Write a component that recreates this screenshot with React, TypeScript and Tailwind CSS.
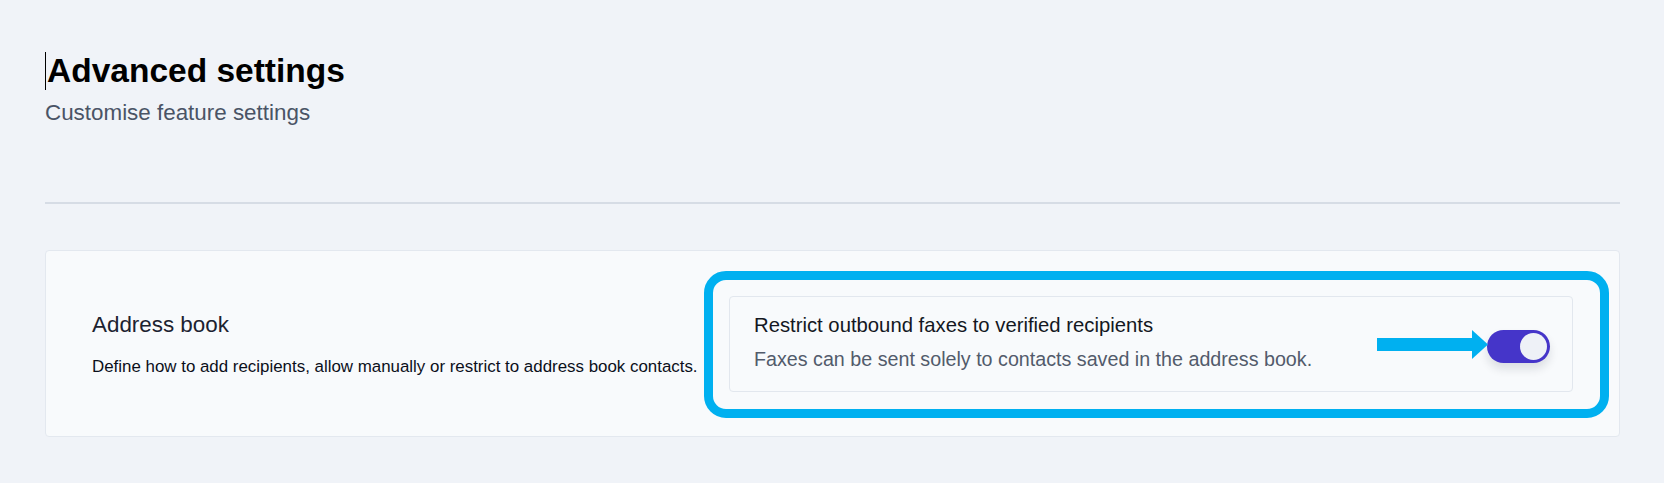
const Toggle = () => {
  return (
    <div className="mt-[6px] flex h-[33px] w-[63px] items-center justify-end rounded-full bg-[#4535c9] px-[3px] shadow-[0_6px_10px_rgba(15,23,42,0.12)]">
      <div className="h-[27px] w-[27px] rounded-full bg-[#eef1f7]" />
    </div>
  );
};

const App = () => {
  return (
    <div className="min-h-[483px] w-full bg-[#f0f3f8] pl-[45px] pr-[44px] pt-[51px] font-['Liberation_Sans',Arial,sans-serif]">
      <h1 className="flex items-start text-[33.5px] font-bold leading-[40px] text-black">
        <span className="mr-px mt-px h-[38px] w-px bg-black" />
        Advanced settings
      </h1>
      <p className="mt-[8px] text-[22.4px] leading-[28px] text-[#4a5466]">
        Customise feature settings
      </p>

      <div className="mt-[75px] h-[2px] w-full bg-[#d6dce5]" />

      <div className="relative mt-[46px] flex h-[187px] items-center rounded-[4px] border border-[#e3e8ef] bg-[#f8fafc] px-[46px]">
        <div className="flex w-[637px] flex-col">
          <h3 className="text-[22.4px] leading-[28px] text-[#1c2230]">Address book</h3>
          <p className="mt-[18px] text-[16.9px] leading-[20px] text-[#0b0f1a]">
            Define how to add recipients, allow manually or restrict to address book contacts.
          </p>
        </div>

        <div className="flex h-[96px] flex-1 items-center justify-between rounded-[4px] border border-[#e2e7ee] bg-[#f8fafc] pl-[24px] pr-[22px]">
          <div className="flex flex-col pb-[4px]">
            <span className="text-[20.3px] leading-[24px] text-[#131722]">
              Restrict outbound faxes to verified recipients
            </span>
            <span className="mt-[10px] text-[19.7px] leading-[24px] text-[#525b6b]">
              Faxes can be sent solely to contacts saved in the address book.
            </span>
          </div>
          <Toggle />
        </div>

        <div className="pointer-events-none absolute left-[658px] top-[20px] h-[147px] w-[905px] rounded-[22px] border-[9px] border-[#00b0f0]" />

        <svg
          className="pointer-events-none absolute left-[1331px] top-[79px]"
          width="111"
          height="29"
          viewBox="0 0 111 29"
        >
          <rect x="0" y="8" width="96" height="13" fill="#00b0f0" />
          <polygon points="95,0 111,14.5 95,29" fill="#00b0f0" />
        </svg>
      </div>
    </div>
  );
};

export default App;
